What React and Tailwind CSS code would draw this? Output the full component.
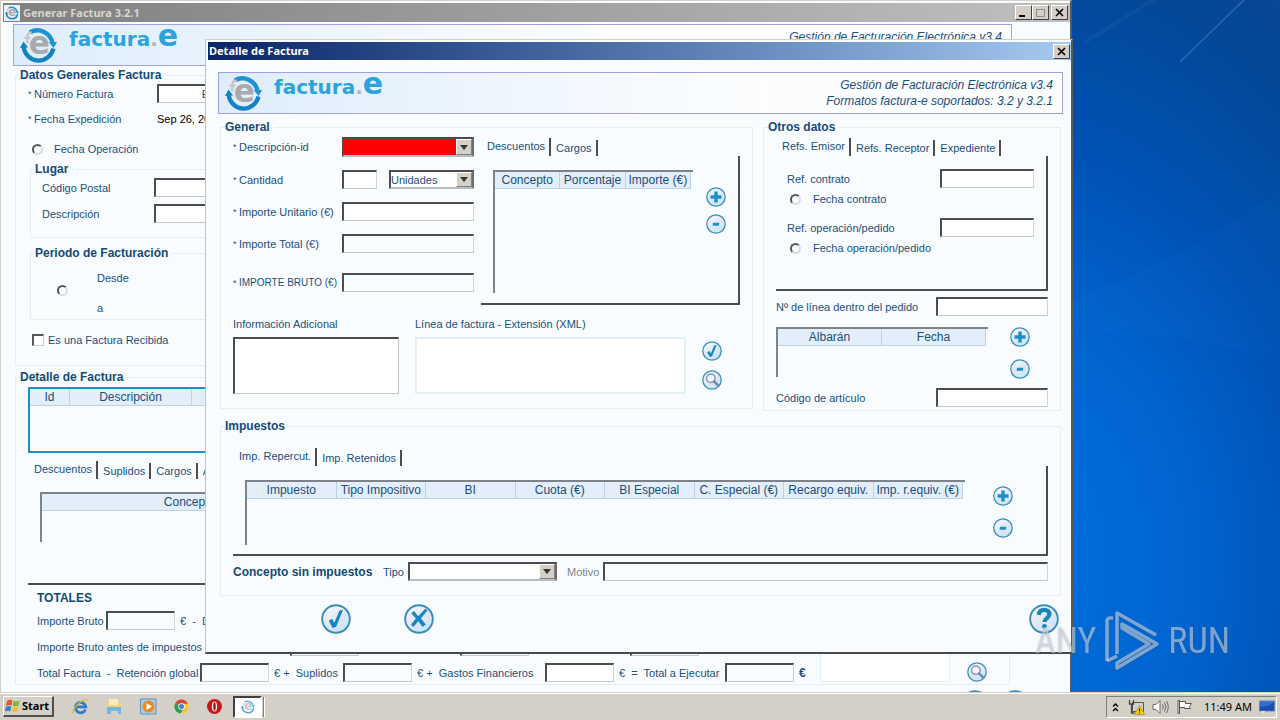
import React, { useState } from 'react';

const inputBase =
  'h-[19px] min-w-0 border-t-2 border-l-2 border-r border-b border-t-[#4c4c52] border-l-[#4c4c52] border-r-[#cfd3d8] border-b-[#c4c8cc] px-1 text-[11px] leading-[14px] outline-none rounded-none';

const TextInput = ({ className = '', ...props }) => (
  <input type="text" className={`${inputBase} ${className}`} {...props} />
);

const Combo = ({ id, label, options = [], className = '', selectClass = 'bg-white' }) => (
  <div className={`flex border-2 border-t-[#4c4c52] border-l-[#4c4c52] border-r-[#6d6d70] border-b-[#b9bcc0] ${className}`}>
    <select id={id} aria-label={label} className={`min-w-0 flex-1 appearance-none rounded-none text-[11px] leading-[14px] outline-none ${selectClass}`}>
      {options.map((o) => (
        <option key={o}>{o}</option>
      ))}
    </select>
    <span className="pointer-events-none flex w-4 items-center justify-center border border-t-white border-l-white border-r-[#808080] border-b-[#808080] bg-[#d4d0c8]">
      <svg width="8" height="5" viewBox="0 0 8 5">
        <path d="M0 0h8L4 5z" fill="#333" />
      </svg>
    </span>
  </div>
);

const Req = ({ htmlFor, className = '', children }) => (
  <label htmlFor={htmlFor} className={`flex items-center whitespace-nowrap ${className}`}>
    <span className="w-[6px] shrink-0 text-[9px]">*</span>
    {children}
  </label>
);

const Group = ({ title, className = '', bodyClass = '', children }) => (
  <fieldset className={`min-w-0 border border-[#e4eef7] ${className}`}>
    <legend className="ml-1 pr-1 text-[12px] leading-[14px] font-bold text-[#134a75]">{title}</legend>
    <div className={bodyClass}>{children}</div>
  </fieldset>
);

const Radio = ({ id, name, className = '' }) => (
  <input
    type="radio"
    id={id}
    name={name}
    className={`size-[11px] shrink-0 appearance-none rounded-full border-2 border-t-[#55585c] border-l-[#55585c] border-r-[#d9dde0] border-b-[#d9dde0] bg-white checked:bg-[#333] ${className}`}
  />
);

const Tabs = ({ names }) => {
  const [active, setActive] = useState(0);
  return (
    <div role="tablist" className="flex h-[19px] items-end">
      {names.map((name, i) => (
        <button
          key={name}
          role="tab"
          aria-selected={i === active}
          onClick={() => setActive(i)}
          className={`border-r-2 border-[#4c4c52] leading-[14px] whitespace-nowrap ${i === active ? 'h-[18px] pr-1 pb-[2px] pl-[6px]' : 'h-4 pr-1 pl-[5px]'}`}
        >
          {name}
        </button>
      ))}
    </div>
  );
};

const GridTable = ({ columns, className = '' }) => (
  <div className={`border-t-2 border-l-2 border-[#7d8388] pr-[2px] ${className}`}>
    <table className="w-full table-fixed border-separate border-spacing-0">
      <thead>
        <tr className="bg-[#e3eefa]">
          {columns.map((c) => (
            <th key={c} className="h-[17px] border-r border-b border-[#bcd3e4] p-0 text-[12px] leading-4 font-normal whitespace-nowrap">
              {c}
            </th>
          ))}
        </tr>
      </thead>
      <tbody />
    </table>
  </div>
);

const glyphs = {
  plus: <path d="M8.3 4.5h3.4v3.8h3.8v3.4h-3.8v3.8H8.3v-3.8H4.5V8.3h3.8z" fill="#1f8fc9" />,
  minus: <path d="M7 8.8h6.4l-.6 3H6.6z" fill="#1f8fc9" />,
  check: <path d="M5.2 11.2l2.2-1.3 1.5 2.6 3.3-8 2.5-.6-4.6 11.3-2.4.8z" fill="#1787c4" />,
  cross: <path d="M4.800 6.200l2-1.500 2.600 3.400 4.800-4.900 1.500.900-4.400 5.600 3.300 3.900-2.200 1.800-2.900-3.900-3.200 3.800-1.700-1.500 3.300-4.100z" fill="#1787c4" />,
  zoom: (
    <>
      <circle cx="8.8" cy="8.2" r="4.3" fill="#f2f3fb" stroke="#8a97bd" strokeWidth="1.5" />
      <path d="M12 11.400l4 4" stroke="#6f87b4" strokeWidth="2.4" strokeLinecap="round" />
    </>
  ),
  help: (
    <>
      <path d="M6.5 7.300c.2-2.300 1.600-3.400 3.600-3.400 2.200 0 3.500 1.200 3.500 3 0 2.500-3.200 2.500-3.300 5.100" fill="none" stroke="#1787b4" strokeWidth="2.800" />
      <circle cx="10.300" cy="14.900" r="1.600" fill="#1787b4" />
    </>
  ),
};

const RoundButton = ({ icon, label, large }) => (
  <button aria-label={label} className={large ? 'size-[30px]' : 'size-5'}>
    <svg viewBox="0 0 20 20" className="size-full">
      <defs>
        <linearGradient id={`shade-${icon}`} x1="0.2" y1="0" x2="0.8" y2="1">
          <stop offset="0" stopColor="#f3f8fd" />
          <stop offset="0.55" stopColor="#dfe6f1" />
          <stop offset="1" stopColor="#c2e6fa" />
        </linearGradient>
      </defs>
      <circle cx="10" cy="10" r="9.2" fill={`url(#shade-${icon})`} stroke="#3a8fb8" strokeWidth="1.3" />
      {glyphs[icon]}
    </svg>
  </button>
);

const LogoMark = ({ className }) => (
  <svg viewBox="0 0 38 38" className={`overflow-visible ${className}`}>
    <path d="M10 5.500A16 16 0 0 1 33.500 17" fill="none" stroke="#1e93d2" strokeWidth="4.500" />
    <path d="M29.500 15.500h8.500l-3.500 6z" fill="#1e93d2" />
    <path d="M34.300 22A16 16 0 0 1 19 34.500A15.500 15.500 0 0 1 3.800 20" fill="none" stroke="#1583c2" strokeWidth="4.500" />
    <path d="M0 21.500l3.600-6.500 4.700 6z" fill="#1583c2" />
    <path d="M12 6q-4-1-4.500 4v7M4.500 11h6" fill="none" stroke="#c9c6c9" strokeWidth="2.500" />
    <text x="9" y="28" fontFamily="DejaVu Sans" fontWeight="bold" fontSize="32" fill="#aaa9ad">e</text>
  </svg>
);

const Banner = ({ className }) => (
  <header className={`flex h-[42px] items-start justify-between border border-[#a3a0de] bg-linear-to-r from-[#deedfc] to-[#fbfdff] to-60% ${className}`}>
    <div className="flex items-start pl-[6px]">
      <LogoMark className="mt-[2px] size-[37px]" />
      <div className="ml-3 flex items-baseline font-['DejaVu_Sans'] text-[20px] leading-[22px] font-bold text-[#2ba3de]">
        factura<span className="text-[#b9b3c4]">.</span>
        <span className="text-[30px] leading-[22px]">e</span>
      </div>
    </div>
    <div className="pt-1 pr-[9px] text-right text-[12px] leading-4 whitespace-nowrap italic">
      <p>Gestión de Facturación Electrónica v3.4</p>
      <p>Formatos factura-e soportados: 3.2 y 3.2.1</p>
    </div>
  </header>
);

const CaptionButton = ({ label, children }) => (
  <button
    aria-label={label}
    className="flex h-[15px] w-[17px] items-center justify-center border border-t-white border-l-white border-r-[#404040] border-b-[#404040] bg-[#d4d0c8]"
  >
    <svg width="11" height="9" viewBox="0 0 11 9">
      {children}
    </svg>
  </button>
);

const closeGlyph = <path d="M2 1l7 7M9 1l-7 7" stroke="#000" strokeWidth="1.700" />;

const InvoiceWindow = () => (
  <section className="absolute top-0 right-[208px] left-0 border-t border-r-2 border-l border-t-[#d4d0c8] border-r-[#5a5a5a] border-l-[#d4d0c8] bg-[#f9fcff] pt-[2px] pl-[2px]">
    <div className="flex h-[19px] items-center bg-linear-to-r from-[#808080] to-[#c0c0c0] pr-[2px] pl-px">
      <span className="flex size-4 items-center justify-center bg-[#e7f3fc]">
        <LogoMark className="size-[14px]" />
      </span>
      <h1 className="ml-[3px] flex-1 font-['Noto_Sans'] text-[11px] leading-4 font-bold text-[#d9d6cf]">Generar Factura 3.2.1</h1>
      <CaptionButton label="Minimizar">
        <path d="M1 8h6" stroke="#000" strokeWidth="2" />
      </CaptionButton>
      <CaptionButton label="Maximizar">
        <path d="M1.500 1.500h8v7h-8z" fill="none" stroke="#8a8a86" />
      </CaptionButton>
      <span className="w-[2px]" />
      <CaptionButton label="Cerrar">{closeGlyph}</CaptionButton>
    </div>

    <Banner className="mt-[2px] mr-[58px] ml-[10px]" />

    <div className="mr-[60px] ml-3">
      <Group title="Datos Generales Factura" className="mt-[2px]" bodyClass="pb-4 pl-3">
        <div className="grid grid-cols-[129px_1fr] items-center gap-y-[7px] pt-[2px]">
          <Req htmlFor="numero">Número Factura</Req>
          <TextInput id="numero" defaultValue="E" className="w-24 bg-white text-center" />
          <Req>Fecha Expedición</Req>
          <span className="leading-[18px] text-black">Sep 26, 2019</span>
        </div>
        <div className="mt-3 flex h-[18px] items-center gap-[11px] pl-1">
          <Radio id="fecha-op" name="fecha-op" />
          <label htmlFor="fecha-op">Fecha Operación</label>
        </div>
        <div className="mr-3 ml-[2px]">
          <Group title="Lugar" className="mt-1" bodyClass="pb-[14px] pl-[11px]">
            <div className="grid grid-cols-[112px_1fr] items-center gap-y-[7px] pt-[2px]">
              <label htmlFor="cp">Código Postal</label>
              <TextInput id="cp" className="w-24 bg-white" />
              <label htmlFor="lugar">Descripción</label>
              <TextInput id="lugar" className="w-24 bg-white" />
            </div>
          </Group>
          <Group title="Periodo de Facturación" className="mt-2" bodyClass="pb-1 pl-[26px]">
            <div className="flex items-start gap-[29px] pt-[11px]">
              <Radio id="periodo" name="periodo" className="mt-[14px]" />
              <label htmlFor="periodo" className="flex flex-col gap-4">
                <span>Desde</span>
                <span>a</span>
              </label>
            </div>
          </Group>
        </div>
        <div className="mt-[11px] flex h-[18px] items-center gap-1 pl-1">
          <input
            type="checkbox"
            id="recibida"
            className="size-3 appearance-none border-t-2 border-r border-b border-l-2 border-t-[#55585c] border-r-[#c9cdd0] border-b-[#c9cdd0] border-l-[#55585c] bg-white checked:bg-[#333]"
          />
          <label htmlFor="recibida">Es una Factura Recibida</label>
        </div>
      </Group>

      <Group title="Detalle de Factura" className="mt-1" bodyClass="pb-[2px] pl-3">
        <div className="pt-[3px] pr-3">
          <div className="h-[66px] border-2 border-[#1a90c8]">
            <table className="w-full table-fixed border-separate border-spacing-0">
              <thead>
                <tr className="bg-[#e3eefa] text-[12px] leading-4">
                  <th className="h-[17px] w-10 border-r border-b border-[#bcd3e4] p-0 font-normal">Id</th>
                  <th className="w-[122px] border-r border-b border-[#bcd3e4] p-0 font-normal">Descripción</th>
                  <th className="border-b border-[#bcd3e4] p-0" />
                </tr>
              </thead>
              <tbody />
            </table>
          </div>
        </div>
        <div className="mt-[7px]">
          <Tabs names={['Descuentos', 'Suplidos', 'Cargos', 'Anticipos']} />
          <div className="mr-3 h-[106px] border-r-2 border-b-2 border-[#4c4c52] pt-[13px] pl-3">
            <GridTable columns={['Concepto']} className="h-[50px] w-[300px]" />
          </div>
        </div>

        <div className="flex justify-between pt-[6px]">
          <div className="flex flex-col gap-[7px] pl-[9px]">
            <h2 className="-mb-px text-[12px] leading-[14px] font-bold text-[#134a75]">TOTALES</h2>
            <div className="flex items-center">
              <label htmlFor="bruto-total" className="w-[69px]">Importe Bruto</label>
              <TextInput id="bruto-total" className="w-[69px] bg-[#f9fcff]" />
              <span className="pl-[5px] whitespace-pre">€  -  Descuentos</span>
            </div>
            <div className="flex items-center gap-[101px]">
              <label htmlFor="antes" className="-mr-[101px] w-[253px]">Importe Bruto antes de impuestos</label>
              <TextInput id="antes" className="w-[69px] bg-[#f9fcff]" />
              <TextInput aria-label="Impuestos repercutidos" className="w-[69px] bg-[#f9fcff]" />
              <TextInput aria-label="Impuestos retenidos" className="w-[69px] bg-[#f9fcff]" />
            </div>
            <div className="flex items-center whitespace-pre">
              <label htmlFor="retencion" className="w-[163px]">Total Factura  -  Retención global</label>
              <TextInput id="retencion" className="w-[69px] bg-[#f9fcff]" />
              <label htmlFor="suplidos" className="w-[74px] pl-[5px]">€ +  Suplidos</label>
              <TextInput id="suplidos" className="w-[69px] bg-[#f9fcff]" />
              <label htmlFor="gastos" className="w-[133px] pl-[5px]">€ +  Gastos Financieros</label>
              <TextInput id="gastos" className="w-[69px] bg-white" />
              <label htmlFor="ejecutar" className="w-[111px] pl-[5px]">€  =  Total a Ejecutar</label>
              <TextInput id="ejecutar" className="w-[69px] bg-[#f9fcff]" />
              <span className="pl-[5px] text-[12px] leading-[14px] font-bold">€</span>
            </div>
          </div>
          <div className="flex items-end gap-[17px] pr-[22px]">
            <textarea aria-label="Extensión" className="h-20 w-[130px] resize-none border border-[#e4eef7] bg-white" />
            <RoundButton icon="zoom" label="Buscar" />
          </div>
        </div>
      </Group>

      <div className="mt-[5px] flex items-start justify-end gap-[10px] pb-1">
        <RoundButton icon="check" label="Validar" large />
        <div className="-mr-5">
          <RoundButton icon="help" label="Ayuda general" large />
        </div>
      </div>
    </div>
  </section>
);

const GeneralGroup = () => (
  <Group title="General" className="flex-1" bodyClass="pr-3 pb-[14px] pl-3">
    <div className="flex gap-[7px] pt-[3px]">
      <div className="grid w-[241px] grid-cols-[109px_1fr] content-start items-center gap-y-[13px]">
        <Req htmlFor="desc">Descripción-id</Req>
        <Combo id="desc" className="h-5" selectClass="bg-[#ff0000]" />
        <Req htmlFor="cantidad">Cantidad</Req>
        <div className="flex justify-between">
          <TextInput id="cantidad" className="w-[35px] bg-white" />
          <Combo label="Unidad de medida" options={['Unidades', 'Horas', 'Kilogramos']} className="h-[19px] w-[85px]" />
        </div>
        <Req htmlFor="unitario">Importe Unitario (€)</Req>
        <TextInput id="unitario" className="w-full bg-white" />
        <Req htmlFor="total">Importe Total (€)</Req>
        <TextInput id="total" readOnly className="w-full bg-[#f9fcff]" />
        <Req htmlFor="bruto" className="pt-[7px] text-[10px]">IMPORTE BRUTO (€)</Req>
        <div className="pt-[7px]">
          <TextInput id="bruto" readOnly className="block w-full bg-[#f9fcff]" />
        </div>
      </div>
      <div className="flex-1">
        <Tabs names={['Descuentos', 'Cargos']} />
        <div className="flex h-[149px] gap-[13px] border-r-2 border-b-2 border-[#4c4c52] pt-[14px] pr-3 pl-3">
          <GridTable columns={['Concepto', 'Porcentaje', 'Importe (€)']} className="h-[123px] flex-1" />
          <div className="flex flex-col gap-[7px] pt-[17px]">
            <RoundButton icon="plus" label="Añadir descuento" />
            <RoundButton icon="minus" label="Quitar descuento" />
          </div>
        </div>
      </div>
    </div>
    <div className="mt-3 flex gap-4">
      <div className="flex w-[166px] flex-col gap-[6px]">
        <label htmlFor="info">Información Adicional</label>
        <textarea
          id="info"
          className="h-[57px] resize-none border-t-2 border-r border-b border-l-2 border-t-[#4c4c52] border-r-[#c4c8cc] border-b-[#c4c8cc] border-l-[#4c4c52] bg-white"
        />
      </div>
      <div className="flex flex-1 flex-col gap-[6px]">
        <label htmlFor="xml">Línea de factura - Extensión (XML)</label>
        <textarea id="xml" className="h-[57px] resize-none border-2 border-[#e4eef5] bg-white" />
      </div>
      <div className="flex flex-col gap-[9px] pt-6 pr-[18px]">
        <RoundButton icon="check" label="Validar extensión" />
        <RoundButton icon="zoom" label="Ver extensión" />
      </div>
    </div>
  </Group>
);

const OtherDataGroup = () => (
  <Group title="Otros datos" className="w-[298px] shrink-0" bodyClass="pr-3 pb-[3px] pl-3">
    <div className="pt-[3px]">
      <Tabs names={['Refs. Emisor', 'Refs. Receptor', 'Expediente']} />
      <div className="h-[135px] border-r-2 border-b-2 border-[#4c4c52] pt-[13px] pr-3 pl-[11px]">
        <div className="flex items-center justify-between">
          <label htmlFor="contrato">Ref. contrato</label>
          <TextInput id="contrato" className="w-[94px] bg-white" />
        </div>
        <div className="mb-2 flex h-[22px] items-center gap-3 pl-[3px]">
          <Radio id="f-contrato" name="f-contrato" />
          <label htmlFor="f-contrato">Fecha contrato</label>
        </div>
        <div className="flex items-center justify-between">
          <label htmlFor="operacion">Ref. operación/pedido</label>
          <TextInput id="operacion" className="w-[94px] bg-white" />
        </div>
        <div className="flex h-[22px] items-center gap-3 pl-[3px]">
          <Radio id="f-operacion" name="f-operacion" />
          <label htmlFor="f-operacion">Fecha operación/pedido</label>
        </div>
      </div>
    </div>
    <div className="mt-[6px] flex items-center justify-between">
      <label htmlFor="linea">Nº de línea dentro del pedido</label>
      <TextInput id="linea" className="w-28 bg-white" />
    </div>
    <div className="mt-[11px] flex justify-between pr-[18px]">
      <GridTable columns={['Albarán', 'Fecha']} className="h-[50px] w-[212px]" />
      <div className="flex flex-col gap-3">
        <RoundButton icon="plus" label="Añadir albarán" />
        <RoundButton icon="minus" label="Quitar albarán" />
      </div>
    </div>
    <div className="mt-[9px] flex items-center justify-between">
      <label htmlFor="articulo">Código de artículo</label>
      <TextInput id="articulo" className="w-28 bg-white" />
    </div>
  </Group>
);

const TaxGroup = () => (
  <Group title="Impuestos" className="mt-2" bodyClass="pr-3 pb-[14px] pl-3">
    <div className="pt-[14px]">
      <Tabs names={['Imp. Repercut.', 'Imp. Retenidos']} />
      <div className="flex h-[90px] gap-[28px] border-r-2 border-b-2 border-[#4c4c52] pt-[14px] pr-[33px] pl-3">
        <GridTable
          columns={['Impuesto', 'Tipo Impositivo', 'BI', 'Cuota (€)', 'BI Especial', 'C. Especial (€)', 'Recargo equiv.', 'Imp. r.equiv. (€)']}
          className="h-[65px] flex-1"
        />
        <div className="flex flex-col gap-3 pt-[6px]">
          <RoundButton icon="plus" label="Añadir impuesto" />
          <RoundButton icon="minus" label="Quitar impuesto" />
        </div>
      </div>
    </div>
    <div className="mt-[6px] flex items-center">
      <span className="w-[150px] text-[12px] leading-[14px] font-bold whitespace-nowrap text-[#134a75]">Concepto sin impuestos</span>
      <label htmlFor="tipo" className="w-[25px]">Tipo</label>
      <Combo id="tipo" className="h-[19px] w-[149px]" />
      <label htmlFor="motivo" className="ml-[10px] w-9 text-[#7b8590]">Motivo</label>
      <TextInput id="motivo" className="flex-1 bg-[#f9fcff]" />
    </div>
  </Group>
);

const DetailDialog = () => (
  <section
    role="dialog"
    aria-label="Detalle de Factura"
    className="absolute top-[39px] right-[207px] left-[205px] border-t border-r-2 border-b-2 border-l border-t-[#d4d0c8] border-r-[#5a5a5a] border-b-[#4a4a4a] border-l-[#c9c2bc] bg-[#f9fcff] pt-[2px] pl-[2px]"
  >
    <div className="flex h-[18px] items-center justify-between bg-linear-to-r from-[#0a246a] to-[#a6caf0] pr-px pl-px">
      <h2 className="font-['Noto_Sans'] text-[11px] leading-4 font-bold text-white">Detalle de Factura</h2>
      <CaptionButton label="Cerrar detalle">{closeGlyph}</CaptionButton>
    </div>
    <Banner className="mt-3 mr-2 ml-[10px]" />
    <div className="mr-[10px] ml-3 pt-[6px]">
      <div className="flex items-start gap-[10px]">
        <GeneralGroup />
        <OtherDataGroup />
      </div>
      <TaxGroup />
      <div className="mt-2 flex justify-between pr-[2px] pb-[18px] pl-[101px]">
        <div className="flex gap-[53px]">
          <RoundButton icon="check" label="Aceptar" large />
          <RoundButton icon="cross" label="Cancelar" large />
        </div>
        <RoundButton icon="help" label="Ayuda" large />
      </div>
    </div>
  </section>
);

const Wallpaper = () => (
  <svg className="absolute inset-0 size-full" viewBox="0 0 1280 692" preserveAspectRatio="xMaxYMid slice">
    <path d="M1180 62L1250 -6" stroke="#6fa3d8" strokeOpacity="0.35" strokeWidth="1.500" />
    <path d="M1085 42L1160 -4" stroke="#6fa3d8" strokeOpacity="0.08" strokeWidth="4" />
    <path d="M1072 300Q1180 260 1280 190V360Q1170 330 1072 330z" fill="#2a86e6" fillOpacity="0.05" />
  </svg>
);

const Watermark = () => (
  <div className="pointer-events-none absolute right-[50px] bottom-5 z-10 flex items-center gap-2 font-['Roboto_Condensed','Liberation_Sans_Narrow','Roboto'] text-[36px] leading-[62px] text-[#cdd6e2]/60 drop-shadow-[0_1px_1px_rgba(60,60,70,0.4)]">
    <span>ANY</span>
    <svg width="56" height="62" viewBox="0 0 56 62" fill="none" stroke="currentColor" strokeWidth="3.500" strokeLinejoin="round">
      <path d="M9 8H6a3 3 0 0 0-3 3v40" />
      <path d="M13 44V3l39 22" />
      <path d="M18 14l35 20L13 58v-5l32-19L18 18z" />
      <path d="M3 51l10-5" />
    </svg>
    <span>RUN</span>
  </div>
);

const Taskbar = () => (
  <footer className="relative flex h-7 shrink-0 items-center justify-between border-t border-[#d4d0c8] bg-[#d4d0c8] pr-[3px] pl-[3px] text-black shadow-[inset_0_1px_0_#fff]">
    <div className="flex items-center">
      <button className="flex h-[21px] items-center gap-px border border-t-white border-r-2 border-b-2 border-l-white border-r-[#505050] border-b-[#505050] pr-[3px] pl-px font-['Noto_Sans'] text-[11px] font-bold">
        <svg width="16" height="16" viewBox="0 0 16 16">
          <path d="M2 3q3-2 5.500-.5L6.500 7.500Q4 6.200 1 8z" fill="#e8562a" />
          <path d="M8.500 3q3 1.200 6-.5L13.500 7.500q-3 1.500-5.800.4z" fill="#7cb83a" />
          <path d="M.8 9q3-1.800 5.500-.5L5.300 13.500Q3 12-.2 13.500z" fill="#3a7bd0" />
          <path d="M7.500 9q3 1.200 5.800-.4L12.300 13.500q-3 1.500-5.800.4z" fill="#f5c22e" />
        </svg>
        Start
      </button>
      <div className="flex items-center gap-[17px] pl-[18px]">
        <button aria-label="Internet Explorer">
          <svg width="17" height="17" viewBox="0 0 17 17" fill="none">
            <path d="M13.500 11.500A5.200 5.200 0 1 1 13.800 8.800H5" stroke="#2b7cd0" strokeWidth="2.800" />
            <path d="M1.500 15.500C-1 12 11-1.500 15.500 2.500" stroke="#e8b52e" strokeWidth="1.400" />
          </svg>
        </button>
        <button aria-label="Explorador">
          <svg width="17" height="17" viewBox="0 0 17 17">
            <path d="M1 3h6l1 2h8v9H1z" fill="#f0d47c" />
            <path d="M3 1h9v6H3z" fill="#f9ecb8" />
            <path d="M1 9h14v7h-3v-3H5v3H1z" fill="#76b4e2" />
          </svg>
        </button>
        <button aria-label="Reproductor">
          <svg width="17" height="17" viewBox="0 0 17 17">
            <path d="M.5 1h15.500v15H.5z" fill="#a8cbe8" stroke="#5f93bf" />
            <circle cx="8.500" cy="8.500" r="6" fill="#f08a1c" />
            <path d="M6.500 5l5.500 3.500L6.500 12z" fill="#fff" />
          </svg>
        </button>
        <button aria-label="Chrome">
          <svg width="15" height="15" viewBox="0 0 16 16">
            <circle cx="8" cy="8" r="7.500" fill="#fbc82c" />
            <path d="M8 8L1.500 4.200A7.500 7.500 0 0 1 14.800 5H8z" fill="#dd4437" />
            <path d="M8 8L1.500 4.200A7.500 7.500 0 0 0 7 15.500L10 10z" fill="#2c9c55" />
            <circle cx="8" cy="8" r="3.500" fill="#fff" />
            <circle cx="8" cy="8" r="2.700" fill="#3f7ee0" />
          </svg>
        </button>
        <button aria-label="Opera">
          <svg width="17" height="17" viewBox="0 0 17 17">
            <circle cx="8.500" cy="8.500" r="7.500" fill="#c2191f" />
            <ellipse cx="8.500" cy="8.500" rx="2.600" ry="5" fill="#f4e8e6" />
            <ellipse cx="8.500" cy="8.500" rx="1.200" ry="4.200" fill="#9d1016" />
          </svg>
        </button>
      </div>
      <button
        aria-label="Generar Factura"
        className="ml-[10px] flex h-[22px] w-[29px] items-center justify-center border-2 border-t-[#404040] border-r-white border-b-white border-l-[#404040] bg-white"
      >
        <LogoMark className="size-[14px] opacity-70" />
      </button>
      <span className="ml-px h-5 w-[2px] border-r border-white bg-[#808080]" />
    </div>
    <div className="flex h-[22px] items-center border border-t-[#808080] border-r-white border-b-white border-l-[#808080] pr-px pl-[5px]">
      <svg width="7" height="10" viewBox="0 0 7 10" fill="none" stroke="#000" strokeWidth="1.300">
        <path d="M1 4.500L3.500 2 6 4.500M1 9l2.500-2.500L6 9" />
      </svg>
      <svg className="ml-[9px]" width="17" height="16" viewBox="0 0 17 16">
        <path d="M4.500 3.500h11v9h-11z" fill="#d0cfc9" stroke="#555" />
        <path d="M1.500 1v4h4V1M3.500 5v9h3" fill="none" stroke="#444" strokeWidth="1.300" />
        <path d="M11.500 6.500l5 9h-10z" fill="#f5cf1d" stroke="#b08c00" strokeWidth="0.700" />
        <path d="M11.500 9.500v3M11.500 13.500v1" stroke="#222" strokeWidth="1.200" />
      </svg>
      <svg className="ml-[7px]" width="17" height="16" viewBox="0 0 17 16" fill="none" stroke="#6b6b6b">
        <path d="M1 5.500h3l4-4v13l-4-4H1z" fill="#fff" />
        <path d="M10.500 5.500q1.500 2.500 0 5M12.500 3.500q2.800 4.500 0 9M14.500 2q3.500 6 0 12" />
      </svg>
      <svg className="ml-[7px]" width="17" height="16" viewBox="0 0 17 16" fill="#fff" stroke="#555">
        <path d="M2 1.500h1.500v13H2z" />
        <path d="M3.500 2.500h6v2h6l-2 3 1 2h-6v-1h-5z" />
      </svg>
      <time className="ml-[11px] font-['Noto_Sans'] text-[11px] leading-4 whitespace-nowrap">11:49 AM</time>
      <svg className="ml-[7px]" width="16" height="14" viewBox="0 0 16 14">
        <path d="M.5 1h15v10H.5z" fill="#2f6fd0" stroke="#5b87b8" />
        <path d="M1 6q7 2 14-4v8.500H1z" fill="#1c4fae" />
        <path d="M2 11l3 2.500L6 11z" fill="#e8eef7" />
      </svg>
    </div>
  </footer>
);

const App = () => (
  <div className="flex h-screen flex-col overflow-hidden font-['Liberation_Sans',sans-serif] text-[11px] leading-[14px] text-[#1a4f7c]">
    <main className="relative min-h-0 flex-1 overflow-hidden bg-[radial-gradient(ellipse_560px_760px_at_1010px_560px,#0070e0_0%,#0066d2_30%,#0052b4_55%,#034796_80%,#104a8c_100%)]">
      <Wallpaper />
      <InvoiceWindow />
      <DetailDialog />
      <Watermark />
    </main>
    <Taskbar />
  </div>
);

export default App;
